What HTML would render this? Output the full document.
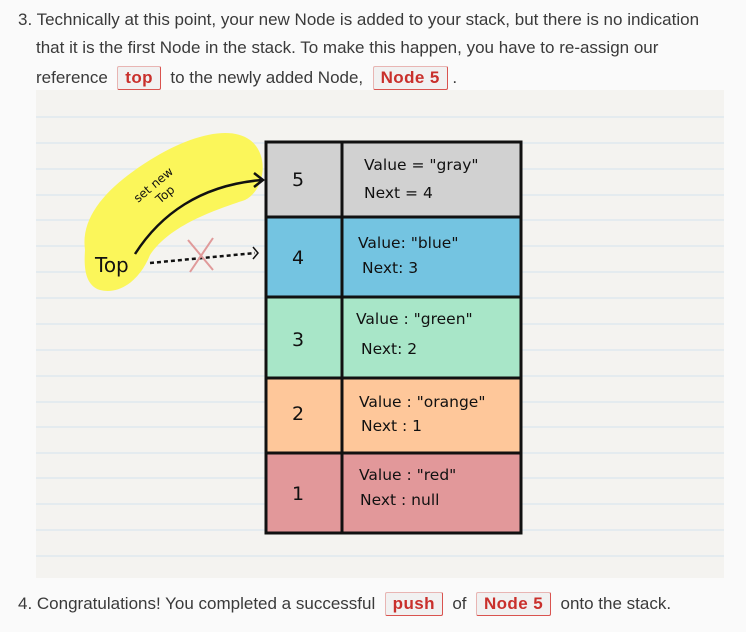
<!DOCTYPE html>
<html><head><meta charset="utf-8"><style>
body{margin:0;width:746px;height:632px;background:#fafafa;font-family:"Liberation Sans",sans-serif;color:#3a3a3a;position:relative;overflow:hidden}
.t{position:absolute;font-size:17px;letter-spacing:0px;white-space:nowrap;line-height:20px}
.c{display:inline-block;background:#f1f1f1;border:1px solid #d9534f;border-left-color:#e8b5b3;border-top-color:#e8b5b3;border-radius:2px;color:#c9302c;font-weight:bold;padding:1px 7px;line-height:20px;letter-spacing:0.4px}
.img{position:absolute;left:36px;top:90px;width:688px;height:488px;background:#f4f3f0}
.hw{font-family:"DejaVu Sans",sans-serif;font-size:15px;fill:#111}
</style></head><body>
<div class="t" style="left:18px;top:10px">3. Technically at this point, your new Node is added to your stack, but there is no indication</div>
<div class="t" style="left:36px;top:38px">that it is the first Node in the stack. To make this happen, you have to re-assign our</div>
<div class="t" style="left:36px;top:66px">reference &nbsp;<span class="c">top</span>&nbsp; to the newly added Node, &nbsp;<span class="c">Node 5</span>&nbsp;.</div>
<div class="img">
<svg width="688" height="488" viewBox="36 90 688 488" xmlns="http://www.w3.org/2000/svg">
<g stroke="#dbe6ee" stroke-width="1.2">
<line x1="36" x2="724" y1="117" y2="117"/><line x1="36" x2="724" y1="143" y2="143"/><line x1="36" x2="724" y1="169" y2="169"/><line x1="36" x2="724" y1="195" y2="195"/><line x1="36" x2="724" y1="220" y2="220"/><line x1="36" x2="724" y1="246" y2="246"/><line x1="36" x2="724" y1="272" y2="272"/><line x1="36" x2="724" y1="298" y2="298"/><line x1="36" x2="724" y1="324" y2="324"/><line x1="36" x2="724" y1="350" y2="350"/><line x1="36" x2="724" y1="376" y2="376"/><line x1="36" x2="724" y1="402" y2="402"/><line x1="36" x2="724" y1="427" y2="427"/><line x1="36" x2="724" y1="453" y2="453"/><line x1="36" x2="724" y1="478" y2="478"/><line x1="36" x2="724" y1="504" y2="504"/><line x1="36" x2="724" y1="530" y2="530"/><line x1="36" x2="724" y1="556" y2="556"/>
</g>
<path d="M85 250 C80 215 110 185 150 160 C190 135 230 125 250 140 C270 155 265 190 245 200 C215 210 170 225 150 255 C140 280 120 295 100 290 C84 285 84 265 85 250Z" fill="#fbf65a"/>
<rect x="266" y="142" width="255" height="75" fill="#d1d1d1"/>
<rect x="266" y="217" width="255" height="80" fill="#74c4e1"/>
<rect x="266" y="297" width="255" height="81" fill="#a8e6c8"/>
<rect x="266" y="378" width="255" height="75" fill="#fec79a"/>
<rect x="266" y="453" width="255" height="80" fill="#e2989a"/>
<g stroke="#111" stroke-width="3" fill="none">
<rect x="266" y="142" width="255" height="391"/>
<line x1="342" y1="142" x2="342" y2="533"/>
<line x1="266" y1="217" x2="521" y2="217"/><line x1="266" y1="297" x2="521" y2="297"/><line x1="266" y1="378" x2="521" y2="378"/><line x1="266" y1="453" x2="521" y2="453"/>
<path d="M135 254 C160 215 200 185 262 180" stroke-width="2.5"/>
<path d="M254 173 L263 180 L254 187" stroke-width="2.5"/>
<path d="M150 263 L255 253" stroke-width="2.5" stroke-dasharray="4 3"/>
<path d="M253 247 L258 253 L253 259" stroke-width="1.5"/>
</g>
<g stroke="#e09a9a" stroke-width="2"><line x1="188" y1="240" x2="213" y2="270"/><line x1="213" y1="238" x2="190" y2="272"/></g>
<text class="hw" x="95" y="272" style="font-size:20px">Top</text>
<text class="hw" x="0" y="0" style="font-size:12px" transform="translate(138,203) rotate(-40)">set new</text>
<text class="hw" x="0" y="0" style="font-size:12px" transform="translate(160,204) rotate(-40)">Top</text>
<g class="hw" text-anchor="middle" style="font-size:19px"><text x="298" y="186">5</text><text x="298" y="264">4</text><text x="298" y="346">3</text><text x="298" y="420">2</text><text x="298" y="500">1</text></g>
<g class="hw" style="font-size:15.5px">
<text x="364" y="170">Value = "gray"</text><text x="364" y="198">Next =  4</text>
<text x="358" y="248">Value: "blue"</text><text x="362" y="273">Next:  3</text>
<text x="356" y="324">Value : "green"</text><text x="361" y="354">Next:  2</text>
<text x="359" y="407">Value : "orange"</text><text x="361" y="431">Next :  1</text>
<text x="359" y="480">Value :  "red"</text><text x="360" y="505">Next :  null</text>
</g>
</svg>
</div>
<div class="t" style="left:18px;top:592px">4. Congratulations! You completed a successful &nbsp;<span class="c">push</span>&nbsp; of &nbsp;<span class="c">Node 5</span>&nbsp; onto the stack.</div>
</body></html>
